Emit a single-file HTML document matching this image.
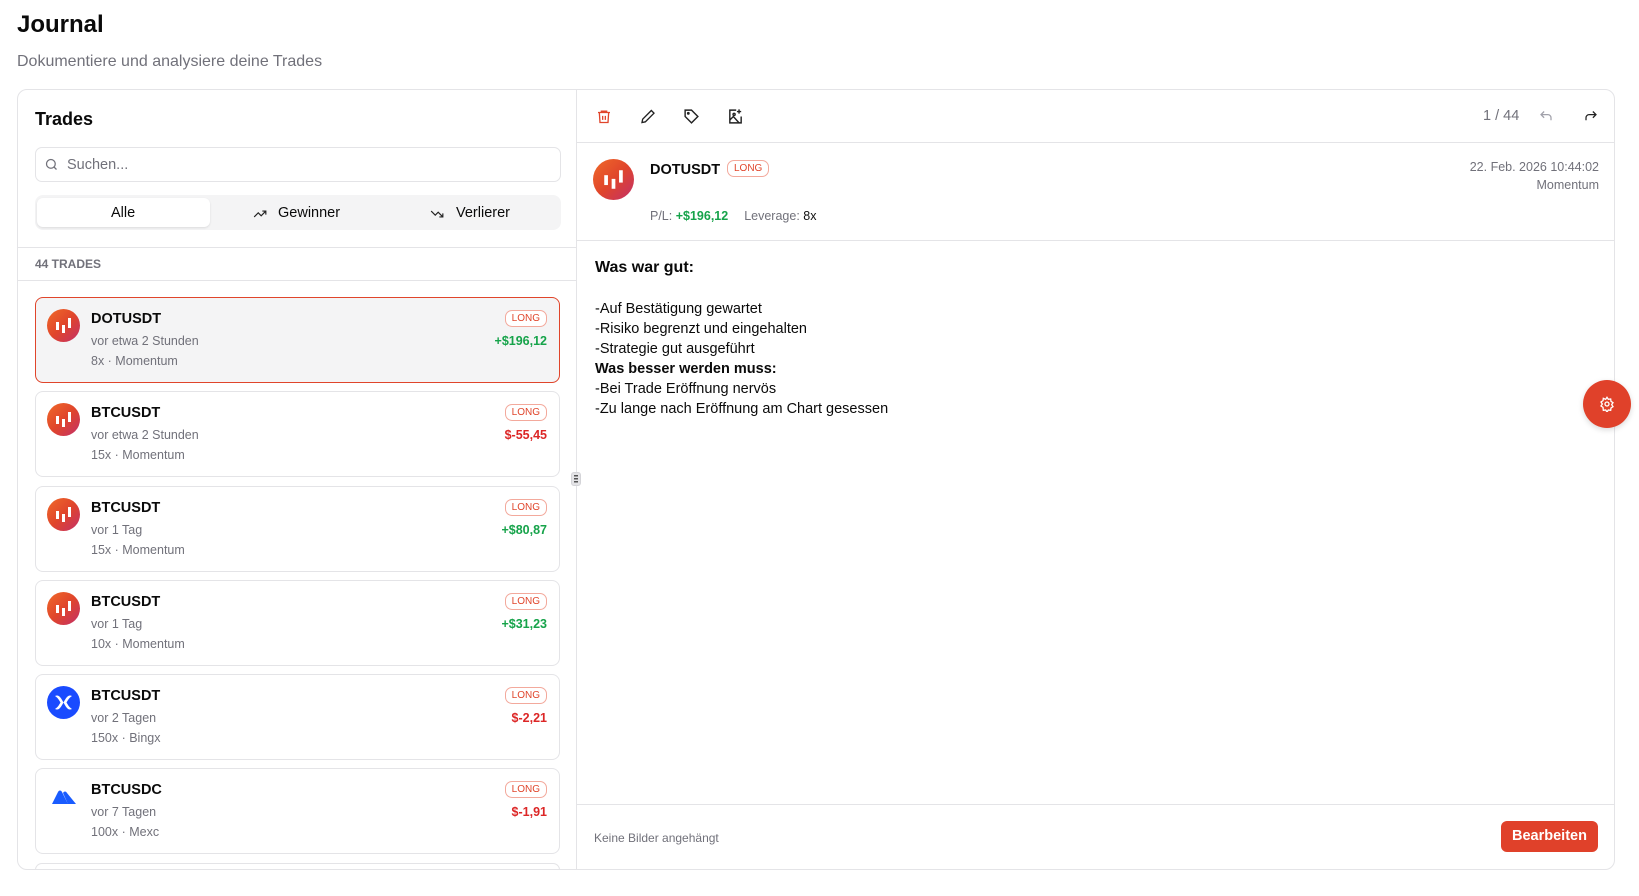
<!DOCTYPE html>
<html><head><meta charset="utf-8"><style>
*{box-sizing:border-box;margin:0;padding:0}
html,body{width:1639px;height:896px;overflow:hidden}
body{background:#fff;font-family:"Liberation Sans",Arial,sans-serif;color:#0a0a0a;position:relative}
.a{position:absolute}
.card{position:absolute;left:17px;top:89px;width:1598px;height:781px;border:1px solid #e4e4e7;border-radius:10px}
.tc{position:absolute;left:35px;width:525px;height:86px;border:1px solid #e4e4e7;border-radius:8px;background:#fff}
.tc.sel{background:#f4f4f5;border-color:#e0452b}
.tc .logo{position:absolute;left:11px;top:11px;width:33px;height:33px;border-radius:50%;background:linear-gradient(135deg,#f06a2a,#e0452b 50%,#c2306a)}
.tc .n{position:absolute;left:55px;top:13px;font-size:14.5px;font-weight:bold}
.tc .s{position:absolute;left:55px;top:36px;font-size:12.5px;color:#71717a}
.tc .s2{position:absolute;left:55px;top:56px;font-size:12.5px;color:#71717a}
.badge{position:absolute;border:1px solid #f3a99c;color:#e0452b;border-radius:7px;font-size:10px;padding:2px 6px;background:#fff}
.tc .badge{right:12px;top:12px}
.tc .pl{position:absolute;right:12px;top:36px;font-size:12.5px;font-weight:bold}
.g{color:#16a34a}.r{color:#dc2626}
.t{position:absolute;left:595px;font-size:14.5px}
</style></head><body>
<div class="a" style="left:17px;top:11px;font-size:24px;font-weight:bold">Journal</div>
<div class="a" style="left:17px;top:53px;font-size:16px;color:#71717a">Dokumentiere und analysiere deine Trades</div>
<div class="card"></div>
<div class="a" style="left:576px;top:90px;width:1px;height:780px;background:#e4e4e7"></div>
<div class="a" style="left:571px;top:472px;width:10px;height:14px;background:#e4e4e7;border-radius:3px;border:1px solid #d4d4d8"></div>
<div class="a" style="left:574px;top:475px;width:4px;height:8px;background:repeating-linear-gradient(#555 0 1.5px,transparent 1.5px 3px)"></div>

<div class="a" style="left:35px;top:109px;font-size:18px;font-weight:bold">Trades</div>
<div class="a" style="left:35px;top:147px;width:526px;height:35px;border:1px solid #e4e4e7;border-radius:7px"></div>
<svg class="a" style="left:44px;top:157px" width="15" height="15" viewBox="0 0 24 24" fill="none" stroke="#71717a" stroke-width="2"><circle cx="11" cy="11" r="7"/><path d="M20 20l-4-4"/></svg>
<div class="a" style="left:67px;top:157px;font-size:14.5px;color:#71717a">Suchen...</div>
<div class="a" style="left:35px;top:195px;width:526px;height:35px;background:#f4f4f5;border-radius:8px"></div>
<div class="a" style="left:37px;top:198px;width:173px;height:29px;background:#fff;border-radius:6px;box-shadow:0 1px 2px rgba(0,0,0,.1)"></div>
<div class="a" style="left:111px;top:205px;font-size:14.5px;font-weight:500">Alle</div>
<svg class="a" style="left:252px;top:207px" width="16" height="14" viewBox="0 0 24 24" fill="none" stroke="#222" stroke-width="2"><path d="M2 17l7-7 5 5 8-8M16 7h6v6"/></svg>
<div class="a" style="left:278px;top:205px;font-size:14.5px">Gewinner</div>
<svg class="a" style="left:429px;top:207px" width="16" height="14" viewBox="0 0 24 24" fill="none" stroke="#222" stroke-width="2"><path d="M2 7l7 7 5-5 8 8M16 17h6v-6"/></svg>
<div class="a" style="left:456px;top:205px;font-size:14.5px">Verlierer</div>
<div class="a" style="left:18px;top:247px;width:558px;height:1px;background:#e4e4e7"></div>
<div class="a" style="left:35px;top:257px;font-size:12px;font-weight:bold;color:#71717a">44 TRADES</div>
<div class="a" style="left:18px;top:280px;width:558px;height:1px;background:#e4e4e7"></div>

<div class="tc sel" style="top:297px"><div class="logo"></div><svg class="a" style="left:19px;top:19px" width="17" height="17" viewBox="0 0 17 17" fill="#fff"><rect x="1" y="5" width="3" height="8"/><rect x="7" y="8" width="3" height="8"/><rect x="13" y="1" width="3" height="10"/></svg><div class="n">DOTUSDT</div><div class="s">vor etwa 2 Stunden</div><div class="s2">8x · Momentum</div><div class="badge">LONG</div><div class="pl g">+$196,12</div></div>
<div class="tc" style="top:391px"><div class="logo"></div><svg class="a" style="left:19px;top:19px" width="17" height="17" viewBox="0 0 17 17" fill="#fff"><rect x="1" y="5" width="3" height="8"/><rect x="7" y="8" width="3" height="8"/><rect x="13" y="1" width="3" height="10"/></svg><div class="n">BTCUSDT</div><div class="s">vor etwa 2 Stunden</div><div class="s2">15x · Momentum</div><div class="badge">LONG</div><div class="pl r">$-55,45</div></div>
<div class="tc" style="top:486px"><div class="logo"></div><svg class="a" style="left:19px;top:19px" width="17" height="17" viewBox="0 0 17 17" fill="#fff"><rect x="1" y="5" width="3" height="8"/><rect x="7" y="8" width="3" height="8"/><rect x="13" y="1" width="3" height="10"/></svg><div class="n">BTCUSDT</div><div class="s">vor 1 Tag</div><div class="s2">15x · Momentum</div><div class="badge">LONG</div><div class="pl g">+$80,87</div></div>
<div class="tc" style="top:580px"><div class="logo"></div><svg class="a" style="left:19px;top:19px" width="17" height="17" viewBox="0 0 17 17" fill="#fff"><rect x="1" y="5" width="3" height="8"/><rect x="7" y="8" width="3" height="8"/><rect x="13" y="1" width="3" height="10"/></svg><div class="n">BTCUSDT</div><div class="s">vor 1 Tag</div><div class="s2">10x · Momentum</div><div class="badge">LONG</div><div class="pl g">+$31,23</div></div>
<div class="tc" style="top:674px"><div class="logo" style="background:#1a4bff"></div><svg class="a" style="left:16px;top:17px" width="23" height="21" viewBox="0 0 23 21"><path d="M3 4c4-2 6 2 8.5 6.5C14 6 16 2 20 4c-3 2-4 4-5.5 6.5C16 13 17 15 20 17c-4 2-6-2-8.5-6.5C9 15 7 19 3 17c3-2 4-4 5.5-6.5C7 8 6 6 3 4z" fill="#fff"/></svg><div class="n">BTCUSDT</div><div class="s">vor 2 Tagen</div><div class="s2">150x · Bingx</div><div class="badge">LONG</div><div class="pl r">$-2,21</div></div>
<div class="tc" style="top:768px"><svg class="a" style="left:15px;top:20px" width="26" height="16" viewBox="0 0 26 16"><path d="M1 15L7 3c1-2 3-2 4 0l6 12H1z M12 4c1-2 3-2 4 0l9 11h-8z" fill="#1a5cff"/></svg><div class="n">BTCUSDC</div><div class="s">vor 7 Tagen</div><div class="s2">100x · Mexc</div><div class="badge">LONG</div><div class="pl r">$-1,91</div></div>
<div class="a" style="left:35px;top:863px;width:525px;height:7px;border:1px solid #e4e4e7;border-bottom:none;border-radius:8px 8px 0 0"></div>

<!-- right -->
<svg class="a" style="left:596px;top:108px" width="16" height="17" viewBox="0 0 24 24" fill="none" stroke="#e0452b" stroke-width="2"><path d="M3 6h18M8 6V4h8v2M5 6l1 15h12l1-15M10 11v6M14 11v6"/></svg>
<svg class="a" style="left:640px;top:108px" width="16" height="17" viewBox="0 0 24 24" fill="none" stroke="#222" stroke-width="2"><path d="M17 3l4 4L8 20l-5 1 1-5z"/></svg>
<svg class="a" style="left:683px;top:108px" width="17" height="17" viewBox="0 0 24 24" fill="none" stroke="#222" stroke-width="2"><path d="M3 3h9l9 9-9 9-9-9z"/><circle cx="7.5" cy="7.5" r="1"/></svg>
<svg class="a" style="left:727px;top:108px" width="17" height="17" viewBox="0 0 24 24" fill="none" stroke="#222" stroke-width="2"><path d="M13 3H4v18h16v-9M17 2v6M14 5h6"/><path d="M4 17l5-5 8 9"/><circle cx="10" cy="9" r="1.5"/></svg>
<div class="a" style="left:1483px;top:108px;font-size:14.5px;color:#71717a">1 / 44</div>
<svg class="a" style="left:1538px;top:109px" width="16" height="15" viewBox="0 0 24 24" fill="none" stroke="#a1a1aa" stroke-width="2"><path d="M9 14L4 9l5-5M4 9h11a5 5 0 015 5v4"/></svg>
<svg class="a" style="left:1583px;top:109px" width="16" height="15" viewBox="0 0 24 24" fill="none" stroke="#222" stroke-width="2"><path d="M15 14l5-5-5-5M20 9H9a5 5 0 00-5 5v4"/></svg>
<div class="a" style="left:577px;top:142px;width:1038px;height:1px;background:#e4e4e7"></div>

<div class="a" style="left:593px;top:159px;width:41px;height:41px;border-radius:50%;background:linear-gradient(135deg,#f06a2a,#e0452b 50%,#c2306a)"></div>
<svg class="a" style="left:603px;top:169px" width="21" height="21" viewBox="0 0 17 17" fill="#fff"><rect x="1" y="5" width="3" height="8"/><rect x="7" y="8" width="3" height="8"/><rect x="13" y="1" width="3" height="10"/></svg>
<div class="a" style="left:650px;top:162px;font-size:14.5px;font-weight:bold">DOTUSDT</div>
<div class="badge" style="left:727px;top:160px">LONG</div>
<div class="a" style="right:40px;top:160px;font-size:12.5px;color:#71717a">22. Feb. 2026 10:44:02</div>
<div class="a" style="right:40px;top:178px;font-size:12.5px;color:#71717a">Momentum</div>
<div class="a" style="left:650px;top:209px;font-size:12.5px;color:#71717a">P/L: <b class="g">+$196,12</b><span style="margin-left:16px">Leverage: <span style="color:#111">8x</span></span></div>
<div class="a" style="left:577px;top:240px;width:1038px;height:1px;background:#e4e4e7"></div>

<div class="t" style="top:259px;font-size:16px;font-weight:bold">Was war gut:</div>
<div class="t" style="top:301px">-Auf Bestätigung gewartet</div>
<div class="t" style="top:321px">-Risiko begrenzt und eingehalten</div>
<div class="t" style="top:341px">-Strategie gut ausgeführt</div>
<div class="t" style="top:361px;font-weight:bold">Was besser werden muss:</div>
<div class="t" style="top:381px">-Bei Trade Eröffnung nervös</div>
<div class="t" style="top:401px">-Zu lange nach Eröffnung am Chart gesessen</div>

<div class="a" style="left:577px;top:804px;width:1038px;height:1px;background:#e4e4e7"></div>
<div class="a" style="left:594px;top:831px;font-size:12px;color:#71717a">Keine Bilder angehängt</div>
<div class="a" style="left:1501px;top:821px;width:97px;height:31px;background:#e0412a;border-radius:6px;color:#fff;font-size:14.5px;font-weight:bold;text-align:center;line-height:31px">Bearbeiten</div>

<div class="a" style="left:1583px;top:380px;width:48px;height:48px;border-radius:50%;background:#e0412a;box-shadow:0 2px 6px rgba(0,0,0,.15)"></div>
<svg class="a" style="left:1599px;top:396px" width="16" height="16" viewBox="0 0 24 24" fill="none" stroke="#fff" stroke-width="2"><path d="M12 2l2 3 3.5-.5.5 3.5 3 2-2 3 2 3-3 2-.5 3.5-3.5-.5-2 3-2-3-3.5.5L6 17l-3-2 2-3-2-3 3-2 .5-3.5L10 5z"/><circle cx="12" cy="12" r="3"/></svg>
</body></html>
